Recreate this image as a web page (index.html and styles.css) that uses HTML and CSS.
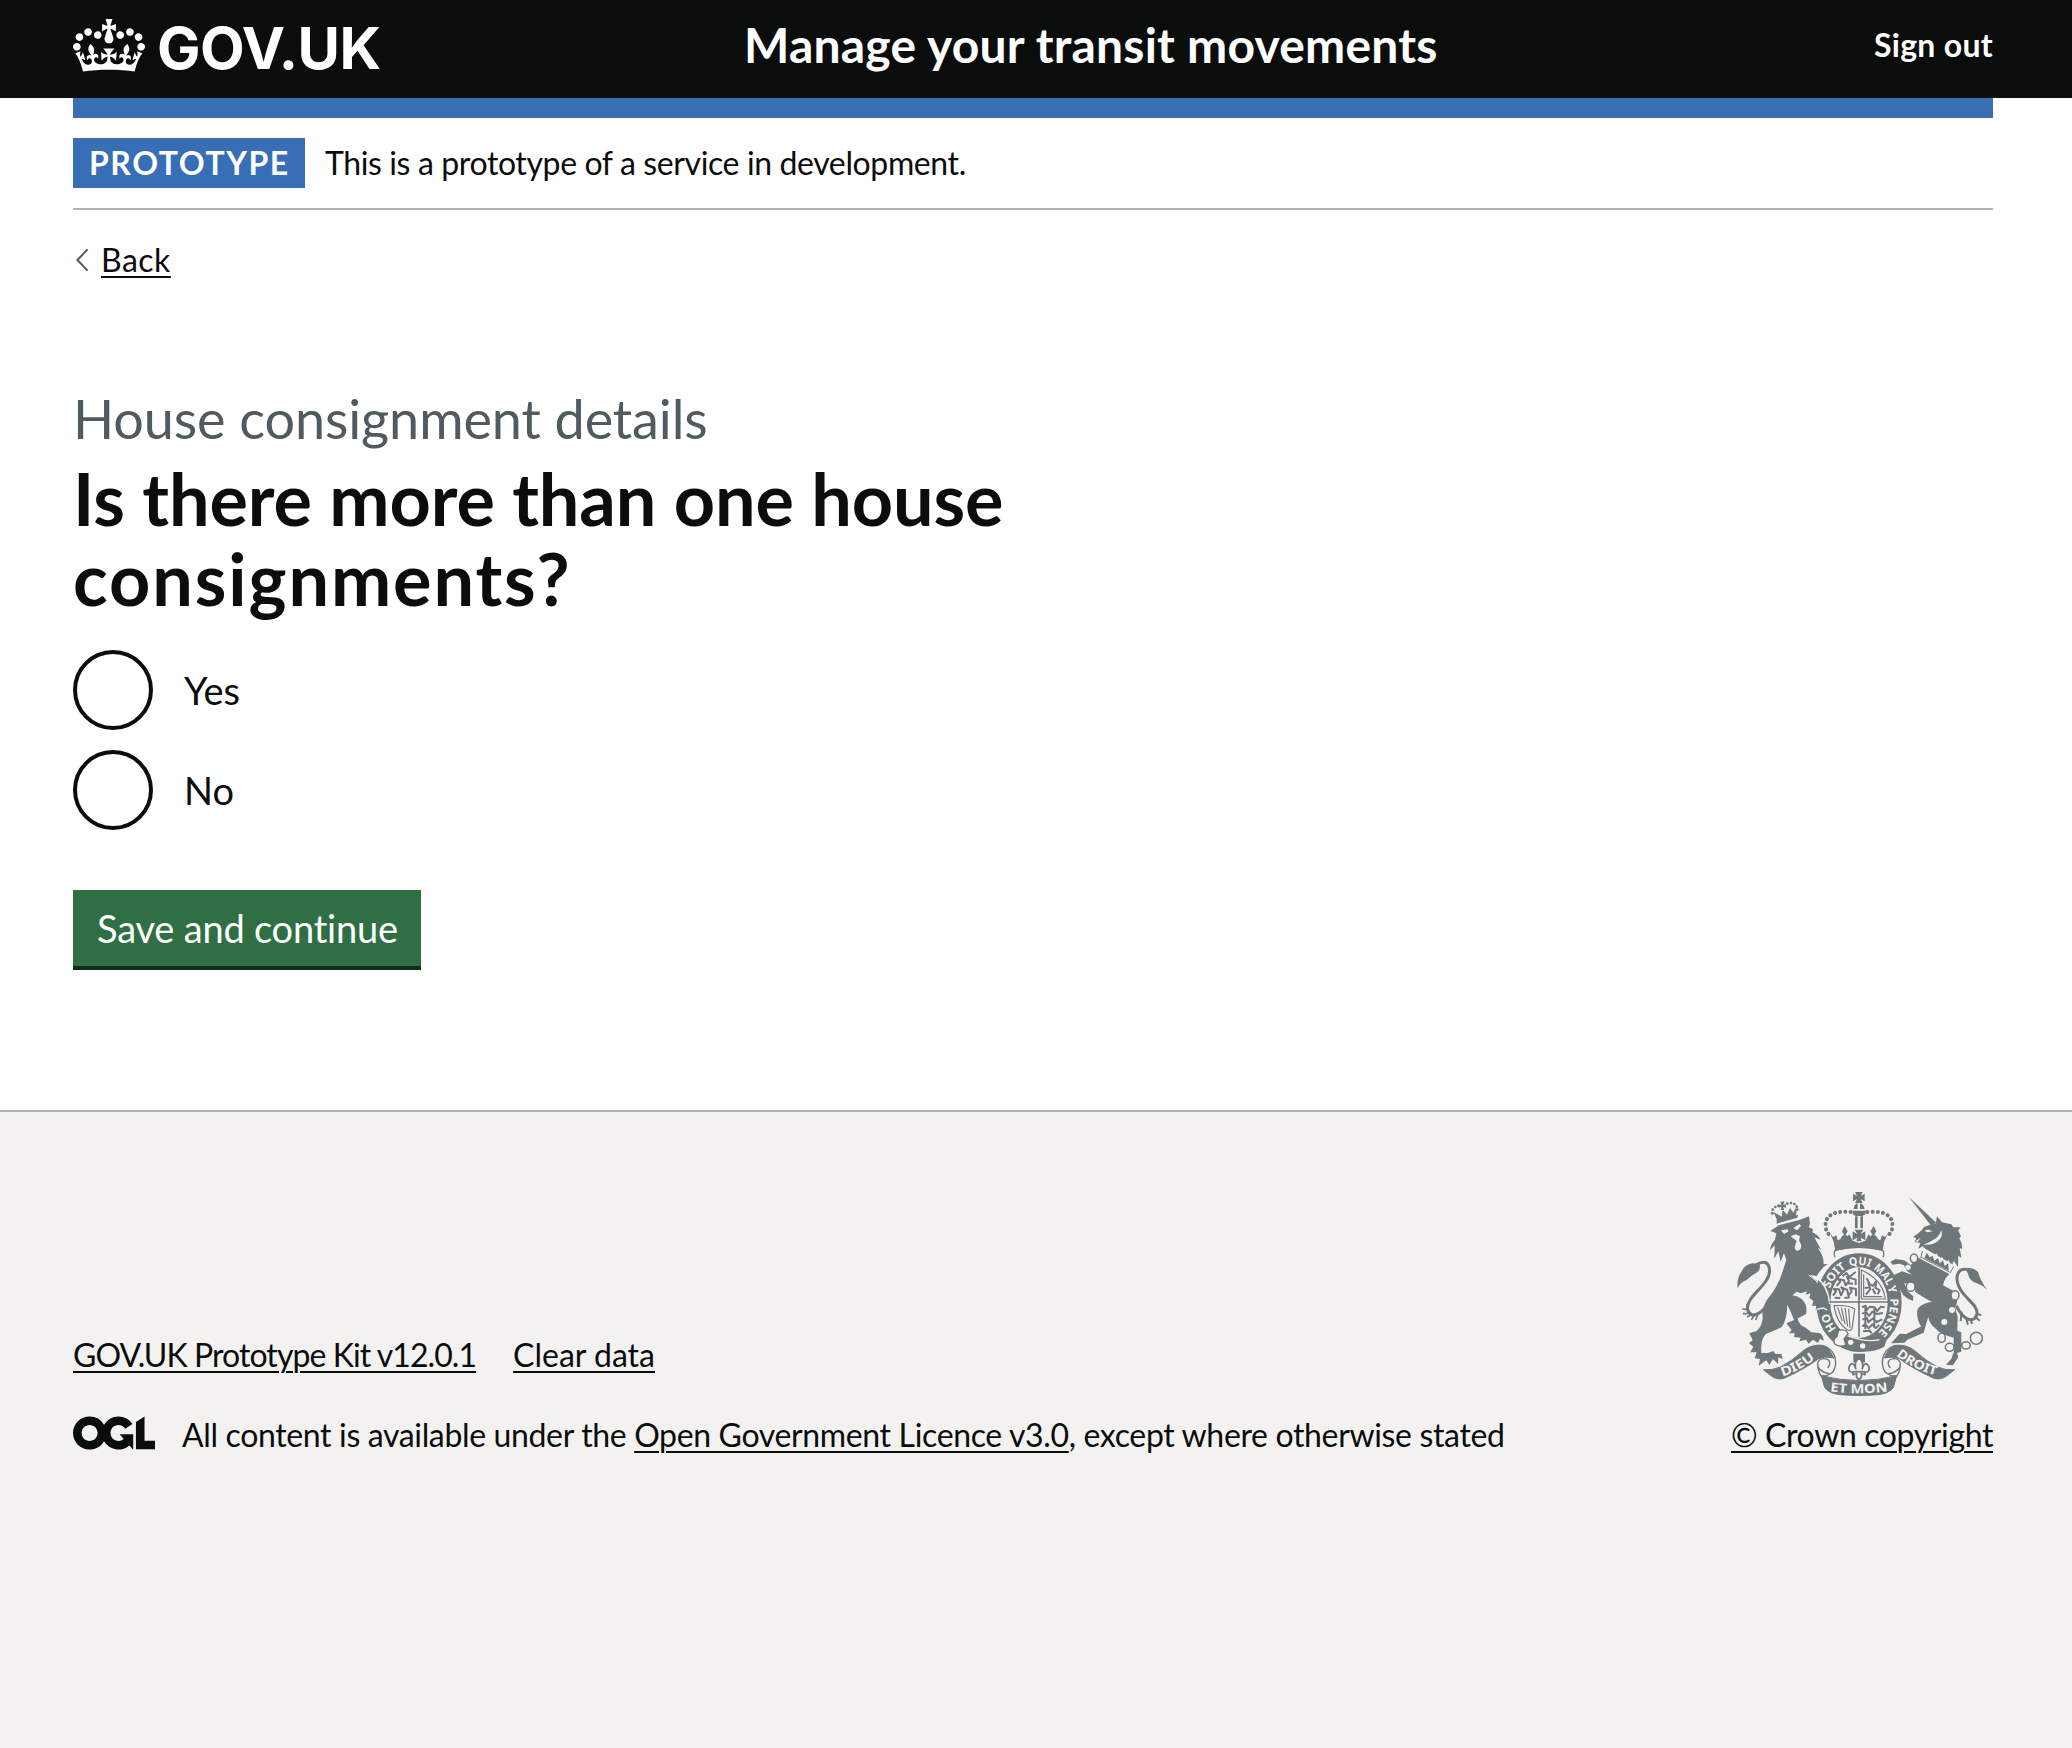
FILE: index.html
```html
<!DOCTYPE html>
<html lang="en">
<head>
<meta charset="utf-8">
<title>Manage your transit movements</title>
<link rel="stylesheet" href="styles.css">
</head>
<body>
<header class="header">
  <div class="container header-row">
    <a class="logo" href="#">
      <svg class="crown" viewBox="0 0 132 97" aria-hidden="true"><path fill="currentColor" fill-rule="evenodd" d="M25 30.2c3.5 1.5 7.7-.2 9.1-3.7 1.5-3.6-.2-7.8-3.9-9.2-3.6-1.4-7.6.3-9.1 3.9-1.4 3.5.3 7.5 3.9 9zM9 39.5c3.6 1.5 7.8-.2 9.2-3.7 1.5-3.6-.2-7.8-3.9-9.1-3.6-1.5-7.6.2-9.1 3.8-1.4 3.5.3 7.5 3.8 9zM4.4 57.2c3.5 1.5 7.7-.2 9.1-3.8 1.5-3.6-.2-7.7-3.9-9.1-3.5-1.5-7.6.3-9.1 3.8-1.4 3.5.3 7.6 3.9 9.1zm38.3-21.4c3.5 1.5 7.7-.2 9.1-3.8 1.5-3.6-.2-7.7-3.9-9.1-3.6-1.5-7.6.3-9.1 3.8-1.3 3.6.4 7.7 3.9 9.1zm64.4-5.6c-3.6 1.5-7.8-.2-9.1-3.7-1.5-3.6.2-7.8 3.8-9.2 3.6-1.4 7.7.3 9.2 3.9 1.3 3.5-.4 7.5-3.9 9zm15.9 9.3c-3.6 1.5-7.7-.2-9.1-3.7-1.5-3.6.2-7.8 3.7-9.1 3.6-1.5 7.7.2 9.2 3.8 1.5 3.5-.3 7.5-3.8 9zm4.7 17.7c-3.6 1.5-7.8-.2-9.2-3.8-1.5-3.6.2-7.7 3.9-9.1 3.6-1.5 7.7.3 9.2 3.8 1.3 3.5-.4 7.6-3.9 9.1zM89.3 35.8c-3.6 1.5-7.8-.2-9.2-3.8-1.4-3.6.2-7.7 3.9-9.1 3.6-1.5 7.7.3 9.2 3.8 1.4 3.6-.3 7.7-3.9 9.1zM69.7 17.7l8.9 4.7V9.3l-8.9 2.8c-.2-.3-.5-.6-.9-.9L72.4 0H59.6l3.5 11.2c-.3.3-.6.5-.9.9l-8.8-2.8v13.1l8.8-4.7c.3.3.6.7.9.9l-5 15.4v.1c-.2.8-.4 1.6-.4 2.4 0 4.1 3.1 7.5 7 8.1h.2c.3 0 .7.1 1 .1.4 0 .7 0 1-.1h.2c4-.6 7.1-4.1 7.1-8.1 0-.8-.1-1.7-.4-2.4V34l-5.1-15.4c.4-.2.7-.6 1-.9zM66 92.8c16.9 0 32.8 1.1 47.1 3.2 4-16.9 8.9-26.7 14-33.5l-9.6-3.4c1 4.9 1.1 7.2 0 10.2-1.5-1.4-3-4.3-4.2-8.7L108.6 76c2.8-2 5-3.2 7.5-3.3-4.4 9.4-10 11.9-13.6 11.2-4.3-.8-6.3-4.6-5.6-7.9 1-4.7 5.7-5.9 8-.5 4.3-8.7-3-11.4-7.6-8.8 7.1-7.2 7.9-13.5 2.1-21.1-8 6.1-8.1 12.3-4.5 20.8-4.7-5.4-12.1-2.5-9.5 6.2 3.4-5.2 7.9-2 7.2 3.1-.6 4.3-6.4 7.8-13.5 7.2-10.3-.9-10.9-8-11.2-13.8 2.5-.5 7.1 1.8 11 7.3L80.2 60c-4.1 4.4-8 5.3-12.3 5.4 1.4-4.4 8-11.6 8-11.6H55.5s6.4 7.2 7.9 11.6c-4.2-.1-8-1-12.3-5.4l1.4 16.4c3.9-5.5 8.5-7.7 10.9-7.3-.3 5.8-.9 12.8-11.1 13.8-7.2.6-12.9-2.9-13.5-7.2-.7-5 3.8-8.3 7.1-3.1 2.7-8.7-4.6-11.6-9.4-6.2 3.7-8.5 3.6-14.7-4.6-20.8-5.8 7.6-5 13.9 2.2 21.1-4.7-2.6-11.9.1-7.7 8.8 2.3-5.5 7.1-4.2 8.1.5.7 3.3-1.3 7.1-5.7 7.9-3.5.7-9-1.8-13.5-11.2 2.5.1 4.7 1.3 7.5 3.3l-4.7-15.4c-1.2 4.4-2.7 7.2-4.3 8.7-1.1-3-.9-5.3 0-10.2l-9.5 3.4c5 6.9 9.9 16.7 14 33.5 14.8-2.1 30.8-3.2 47.7-3.2z"/></svg>
      <span class="logo-text">GOV.UK</span>
    </a>
    <a class="service-name" href="#">Manage your transit movements</a>
    <a class="sign-out" href="#">Sign out</a>
  </div>
</header>
<div class="page">
  <div class="container">
    <div class="header-bar"></div>
    <div class="phase-banner">
      <strong class="tag">PROTOTYPE</strong>
      <span class="phase-text">This is a prototype of a service in development.</span>
    </div>
    <div class="back">
      <svg class="chevron" viewBox="0 0 14 24" aria-hidden="true"><path d="M12.6 1.4 2.4 12l10.2 10.6" fill="none" stroke="#505a5f" stroke-width="2"/></svg>
      <a class="link back-link" href="#">Back</a>
    </div>
    <main class="main">
      <div class="caption">House consignment details</div>
      <h1 class="title">Is there more than one house <br><span class="title-end">consignments?</span></h1>
      <div class="radios">
        <label class="radio"><span class="radio-dot"></span><span>Yes</span></label>
        <label class="radio"><span class="radio-dot"></span><span>No</span></label>
      </div>
      <button class="button" type="button">Save and continue</button>
    </main>
  </div>
</div>
<footer class="footer">
  <div class="container footer-row">
    <div class="footer-meta">
      <div class="footer-links">
        <a class="link kit" href="#">GOV.UK Prototype Kit v12.0.1</a>
        <a class="link" href="#">Clear data</a>
      </div>
      <div class="licence">
        <svg class="ogl" viewBox="0 0 483.2 195.7" aria-hidden="true"><path fill="currentColor" d="M421.5 142.8V.1l-50.7 32.3v161.1h112.4v-50.7zm-122.3-9.6A47.12 47.12 0 0 1 221 97.8c0-26 21.1-47.1 47.1-47.1 16.7 0 31.4 8.7 39.7 21.8l42.7-27.2A97.63 97.63 0 0 0 268.1 0c-36.5 0-68.3 20.1-85.1 49.7A98 98 0 0 0 97.8 0C43.9 0 0 43.9 0 97.8s43.9 97.8 97.8 97.8c36.5 0 68.3-20.1 85.1-49.7a97.76 97.76 0 0 0 149.6 25.4l19.4 22.2h3v-87.8h-80l24.3 27.5zM97.8 145c-26 0-47.1-21.1-47.1-47.1s21.1-47.1 47.1-47.1 47.1 21.1 47.1 47.1S123.8 145 97.8 145"/></svg>
        <span class="licence-text">All content is available under the <a class="link" href="#">Open Government Licence v3.0</a>, except where otherwise stated</span>
      </div>
    </div>
    <div class="copyright">
      <svg class="crest" viewBox="81 66 750 612" aria-hidden="true">
        <defs>
          <path id="garter" d="M447 511A94 113 0 0 1 447 285A94 113 0 0 1 447 511"/>
          <path id="dieu" d="M217 619Q270 605 328 556"/>
          <path id="droit" d="M558 556Q620 605 690 619"/>
          <path id="mon" d="M360 664Q447 676 534 664"/>
        </defs>
        <!-- lion -->
        <g fill="#6f777b">
          <path d="M200 161 262 143 264 134 200 151Z"/>
          <path d="M191 126 202 153 258 138 260 108 250 128 240 114 231 134 218 120 215 140Z"/>
          <path d="M211 96 223 94 220 105 228 103V113L220 111 222 120H213L214 111 206 113V104L214 105Z"/>
          <g><circle cx="187" cy="130" r="4.5"/><circle cx="188" cy="119" r="4"/><circle cx="196" cy="111" r="4"/><circle cx="205" cy="107" r="4"/><circle cx="232" cy="101" r="4"/><circle cx="243" cy="99" r="4"/><circle cx="253" cy="102" r="4"/><circle cx="260" cy="110" r="4"/><circle cx="262" cy="119" r="4"/></g>
          <path d="M181 183 206 166 270 149 297 139 300 162 296 172 309 177 307 187Q325 196 332 209L313 202 333 239 323 233Q342 258 341 283L354 282Q336 291 320 318L300 315 324 336Q342 354 349 378L358 401 347 405 353 419 340 413 337 426 327 414 317 421 319 407 306 408 310 393 298 383 301 370 287 374 291 364 273 370 260 365 247 376Q263 378 274 386Q294 404 288 432L262 446 272 465Q288 472 304 487L329 489Q341 497 341 512L330 506 324 519 309 509 296 521 288 509 268 514 272 503 252 501 254 490 237 490 245 480 229 460 252 450Q245 430 232 404Q231 452 214 472L168 492Q151 505 154 549L174 549 190 543 196 552 214 552 218 567 205 562 204 582 189 567 178 585 169 571 146 587 150 567 134 565 140 547 121 547 130 530 117 520 128 510 118 490 140 483Q158 466 158 440Q153 407 185 371Q205 344 216 310L229 270 222 250 212 275 205 244 193 266 194 226 180 241Q181 224 195 209L199 190Z"/>
          <path d="M83 354Q79 325 96 302Q107 282 128 280L148 281Q154 300 139 308Q124 316 111 329Q91 336 83 354Z"/>
        </g>
        <path d="M138 285Q176 263 179 302C178 346 111 376 112 416Q118 444 146 430Q165 420 182 387" fill="none" stroke="#6f777b" stroke-width="9"/>
        <path d="M112 402Q115 424 97 416M114 414Q118 436 99 430M121 427Q123 440 111 440M134 434 124 449M146 427 137 450" fill="none" stroke="#6f777b" stroke-width="5"/>
        <path d="M213 181 232 178 236 184 222 192ZM250 174 269 162 273 168 261 181ZM242 199 257 193 270 199 267 211 274 226Q274 241 263 242Q254 241 254 230L260 213Z" fill="#f3f2f1"/>
        <path d="M296 315Q340 343 358 402" fill="none" stroke="#f3f2f1" stroke-width="3"/>
        <!-- unicorn -->
        <g fill="#6f777b">
          <path d="M596 80 679 158 664 168Z"/>
          <path d="M677 161 681 139 696 157 724 163 730 172 752 172 744 181 753 199 748 205Q758 223 756 238L749 233 754 263 745 257 744 291 731 272 725 290 715 269 707 282 696 260 688 270 680 250 667 261 655 242 646 240 639 229 625 236 631 219 613 216 619 206 610 200Q635 184 642 171Q657 163 677 161Z"/>
          <path d="M625 263 718 312Q701 329 699 346L735 365Q749 390 735 412L743 440 742 482 754 487V545L741 549 745 561 729 586 708 584 724 566 731 547V503Q690 493 676 475Q657 460 655 440L650 457 641 488 592 509 583 518 543 520 569 491 589 492 634 469Q621 453 621 425Q624 402 666 396 634 379 616 366L614 342 583 340 592 363 610 379 609 393 594 386 580 376 565 350 552 331 553 314 576 304 606 314 590 302 582 286 568 281 548 284 541 276 556 267 583 271 602 285Q613 275 625 263Z"/>
          <path d="M766 295Q789 290 804 306Q810 329 831 360Q817 345 801 340Q777 332 774 311Z"/>
        </g>
        <path d="M779 300C739 288 732 326 752 360C773 392 803 406 801 431Q797 455 772 447Q752 436 739 407" fill="none" stroke="#6f777b" stroke-width="9"/>
        <path d="M755 425 752 453M767 440 774 464M782 446 786 462M793 438 809 452M798 430 814 436" fill="none" stroke="#6f777b" stroke-width="6"/>
        <path d="M638 232 736 288 721 312 630 263Z" fill="#f3f2f1"/>
        <path d="M637 243 632 265M731 289 720 309M634 262 718 306" fill="none" stroke="#6f777b" stroke-width="3"/>
        <path d="M643 264 650 248 659 262 668 257 673 272 684 264 689 280 699 271 704 288 715 280 716 302Z" fill="#6f777b"/>
        <path d="M644 182Q656 175 667 184L652 187ZM694 181Q702 210 666 223L640 225 664 213Q686 204 694 181ZM616 214 632 203 623 216Z" fill="#f3f2f1"/>
        <g fill="#f3f2f1"><circle cx="703" cy="456" r="9"/><circle cx="726" cy="420" r="9"/><circle cx="594" cy="292" r="8"/></g>
        <g fill="none" stroke="#6f777b" stroke-width="4.5"><ellipse cx="612" cy="265" rx="11" ry="13" fill="#f3f2f1"/><ellipse cx="602" cy="350" rx="13" ry="14" fill="#f3f2f1"/><ellipse cx="735" cy="376" rx="12" ry="14" fill="#f3f2f1"/><ellipse cx="695" cy="503" rx="11" ry="14"/><ellipse cx="719" cy="532" rx="13" ry="12"/><ellipse cx="768" cy="526" rx="13" ry="11"/><circle cx="799" cy="505" r="18"/></g>
        <!-- royal crown -->
        <g fill="#6f777b">
          <path d="M435 66H458L452 78 464 71V94L452 87 458 99H435L441 87 429 94V71L441 78ZM431 117Q432 102 443 100V117ZM450 100Q462 103 464 117H450ZM427 122H468L465 134 456 138H437L430 134Z"/>
          <path d="M435 139H443V175H435ZM451 139H459V175H451ZM434 179 460 179 452 192 466 184V211L452 203 455 214H439L442 203 428 211V184L442 192Z"/>
          <path d="M360 190 369 201 379 196 383 211 391 208 396 199 402 194 396 184 404 168 413 184 407 194 413 199 418 193 428 212 447 219 466 212 476 193 481 199 487 194 481 184 491 168 499 184 493 194 499 199 504 208 511 211 516 196 525 201 534 190 522 215 518 243Q447 223 376 243L371 215Z"/>
        </g>
        <path d="M437 129C401 120 342 123 347 170Q348 187 361 197M457 129C493 120 552 123 547 170Q546 187 533 197" fill="none" stroke="#6f777b" stroke-width="12" stroke-linecap="round" stroke-dasharray=".1 15.5"/>
        <path d="M375 262Q366 238 387 238Q447 226 507 238Q528 238 519 262" fill="none" stroke="#6f777b" stroke-width="4"/>
        <!-- garter and shield -->
        <ellipse cx="447" cy="398" rx="107" ry="127" fill="#f3f2f1" stroke="#6f777b" stroke-width="42"/>
        <path d="M325 330Q352 352 357 402L345 422 322 415 315 380Z" fill="#6f777b"/>
        <path d="M317 320Q354 346 359 402M320 418 339 414 352 420" fill="none" stroke="#f3f2f1" stroke-width="4"/>
        <g fill="none" stroke="#6f777b" stroke-width="3.5">
          <path d="M447 293V500M358 396H536" stroke-width="5"/>
          <path d="M454 300V387H526Q519 330 454 300ZM461 313V380H517"/>
          <path d="M372 407Q380 460 412 480Q427 484 427 470L434 417Q417 404 372 407ZM383 412 397 453M394 413 405 462M405 414 413 470M416 416 420 474"/>
        </g>
        <g fill="none" stroke="#6f777b" stroke-width="6" stroke-linejoin="round">
          <path d="M369 377 378 364 371 357 387 358 393 376 400 362 394 352 412 360 415 377 425 364 420 353 438 357 438 379M380 348 391 335 384 327 402 331 407 346 417 333 411 321 437 329 437 345M397 319 409 309 418 321 437 306M413 340 429 341M374 383 391 384M403 384 420 382"/>
          <path d="M456 412 467 407 470 420 480 410 494 412 501 423 513 410 524 412M456 431 469 427 477 438 487 425 501 432 519 429M457 449 471 444 475 457 489 445 500 456 517 448M457 469 466 463 476 475 487 463 497 474 508 465M459 484 479 482 485 490M466 412V478M493 414V474"/>
          <path d="M468 374 481 357 475 339 489 348 499 334 496 353 509 361 503 373M470 325 479 342M464 354 482 352M488 356 496 372"/>
        </g>
        <path d="M384 485Q418 507 467 507 512 503 540 479L523 530Q465 561 399 527Q376 508 384 485Z" fill="#6f777b"/>
        <path d="M411 497Q471 519 508 509" fill="none" stroke="#f3f2f1" stroke-width="4"/>
        <g fill="#f3f2f1"><circle cx="422" cy="517" r="8"/><circle cx="458" cy="528" r="8"/></g>
        <path d="M386 481Q410 475 414 492L402 507 408 525Q389 533 374 522Q367 508 381 500Z" fill="#f3f2f1" stroke="#6f777b" stroke-width="4"/>
        <g class="motto garter-motto"><text><textPath href="#garter" startOffset="78" textLength="54" lengthAdjust="spacingAndGlyphs">HO</textPath></text><text><textPath href="#garter" startOffset="205" textLength="80" lengthAdjust="spacingAndGlyphs">SOIT</textPath></text><text><textPath href="#garter" startOffset="297" textLength="62" lengthAdjust="spacingAndGlyphs">QUI</textPath></text><text><textPath href="#garter" startOffset="370" textLength="66" lengthAdjust="spacingAndGlyphs">MAL</textPath></text><text><textPath href="#garter" startOffset="440">Y</textPath></text><text><textPath href="#garter" startOffset="476" textLength="112" lengthAdjust="spacingAndGlyphs">PENSE</textPath></text></g>
        <!-- ribbon -->
        <g fill="#6f777b" stroke="#6f777b" stroke-width="3">
          <path d="M160 599Q186 602 211 591 245 574 280 542 306 522 338 526 358 532 371 564 341 558 326 566 284 597 222 625 201 631 183 617Z"/>
          <path d="M734 599Q708 602 683 591 649 574 614 542 588 522 556 526 536 532 523 564 553 558 568 566 610 597 672 625 693 631 711 617Z"/>
          <path d="M334 617Q447 646 560 617L550 653Q537 670 505 674 447 679 389 674 357 670 344 653Z"/>
        </g>
        <g fill="none" stroke="#6f777b" stroke-width="4"><path d="M338 527Q376 537 377 580 375 605 360 612 321 604 323 579 329 561 353 568 366 579 353 594M323 577Q322 603 335 621M360 612Q347 620 336 617M556 527Q518 537 517 580 519 605 534 612 573 604 571 579 565 561 541 568 528 579 541 594M571 577Q572 603 559 621M534 612Q547 620 558 617"/></g>
        <path d="M430 551H465V577H430Z" fill="#6f777b"/>
        <path d="M447 564Q430 578 438 598 428 568 417 591 414 609 431 606 423 620 440 610 437 624 447 628 457 624 454 610 471 620 463 606 480 609 477 591 466 568 456 598 464 578 447 564Z" fill="#f3f2f1" stroke="#6f777b" stroke-width="5"/>
        <path d="M431 605H463" stroke="#6f777b" stroke-width="5"/>
        <g class="motto"><text><textPath href="#dieu" textLength="112" lengthAdjust="spacingAndGlyphs">DIEU</textPath></text><text><textPath href="#droit" textLength="134" lengthAdjust="spacingAndGlyphs">DROIT</textPath></text><text><textPath href="#mon" textLength="174" lengthAdjust="spacingAndGlyphs">ET MON</textPath></text></g>
      </svg>
      <a class="link copy-link" href="#">© Crown copyright</a>
    </div>
  </div>
</footer>
</body>
</html>
```
FILE: styles.css
```css
* { box-sizing: border-box; }
body {
  margin: 0;
  background: #f3f2f1;
  color: #0b0c0c;
  font-family: Lato, "Noto Sans", sans-serif;
  font-size: 32px;
  line-height: 40px;
}
.container { margin: 0 79px 0 73px; }
.header { background: #0b0c0c; color: #fff; height: 98px; }
.header a { color: #fff; text-decoration: none; white-space: nowrap; }
.header-row { display: grid; grid-template-columns: 671px 1fr auto; }
.logo { display: flex; gap: 12px; }
.crown { width: 72px; height: 53px; margin-top: 19px; }
.logo-text { font-family: Inter, sans-serif; font-size: 58px; font-weight: 650; line-height: 60px; margin-top: 18px; letter-spacing: -.6px; }
.service-name { justify-self: start; font-size: 48px; font-weight: 700; line-height: 60px; margin-top: 15px; letter-spacing: .2px; }
.sign-out { font-weight: 700; margin-top: 25px; letter-spacing: .3px; }
.page { background: #fff; }
.header-bar { height: 20px; background: #386eb5; }
.phase-banner { display: flex; align-items: center; gap: 20px; padding: 20px 0; border-bottom: 2px solid #b1b4b6; white-space: nowrap; }
.tag { background: #386eb5; color: #fff; padding: 5px 16px; width: 232px; letter-spacing: 1.55px; }
.phase-text { letter-spacing: -.38px; }
.link { color: #0b0c0c; text-decoration: underline; text-decoration-thickness: 2px; text-underline-offset: 4px; }
.back { display: flex; align-items: center; gap: 12px; margin-top: 30px; }
.back-link { letter-spacing: .5px; }
.chevron { width: 14px; height: 24px; margin-left: 2px; }
.main { padding: 109px 0 144px; }
.caption { color: #505a5f; font-size: 54px; line-height: 60px; margin-bottom: 9px; letter-spacing: -.1px; }
.title { font-size: 72px; line-height: 80px; font-weight: 700; margin: 0 0 32px; letter-spacing: -.1px; }
.title-end { letter-spacing: 1.9px; }
.radios { display: grid; gap: 20px; margin-bottom: 60px; font-size: 38px; }
.radio { display: flex; align-items: center; gap: 31px; line-height: 80px; }
.radio-dot { width: 80px; height: 80px; border: 4px solid #0b0c0c; border-radius: 50%; }
.button { display: block; width: 348px; height: 76px; border: 0; padding: 0 0 0 24px; background: #2f6f43; color: #fff; box-shadow: 0 4px 0 #122b1a; font: 38px/76px Lato, "Noto Sans", sans-serif; letter-spacing: -.2px; text-align: left; white-space: nowrap; }
.footer { border-top: 2px solid #b1b4b6; padding-top: 80px; }
.footer-row { display: flex; justify-content: space-between; align-items: flex-end; }
.footer-links { display: flex; gap: 37px; margin-bottom: 40px; }
.kit { letter-spacing: -.93px; }
.licence { display: flex; gap: 27px; }
.ogl { width: 82px; height: 34px; margin-top: 1px; }
.licence-text { white-space: nowrap; letter-spacing: -.35px; }
.copyright { display: flex; flex-direction: column; align-items: center; }
.crest { width: 250px; height: 204px; margin-bottom: 19px; }
.copy-link { letter-spacing: -.38px; }
.motto { fill: #f3f2f1; font: 700 38px "Noto Sans", sans-serif; }
.garter-motto { font-size: 34px; }
```
